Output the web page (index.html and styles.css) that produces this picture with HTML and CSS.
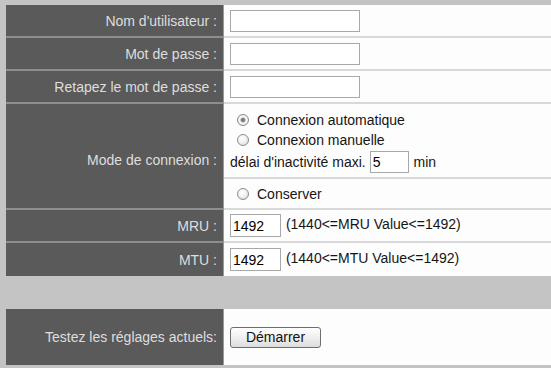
FILE: index.html
```html
<!DOCTYPE html>
<html>
<head>
    <title>Réglages PPPoE</title>
    <link rel="stylesheet" href="styles.css">
</head>
<body>
    <div class="page">
        <table class="settings">
            <tr>
                <td class="label">Nom d'utilisateur :</td>
                <td class="value"><input type="text" class="text-input"></td>
            </tr>
            <tr>
                <td class="label">Mot de passe :</td>
                <td class="value"><input type="password" class="text-input"></td>
            </tr>
            <tr>
                <td class="label">Retapez le mot de passe :</td>
                <td class="value"><input type="password" class="text-input"></td>
            </tr>
            <tr>
                <td class="label mode-label" rowspan="2">Mode de connexion :</td>
                <td class="value mode-cell">
                    <label class="radio-line first"><input type="radio" name="mode" checked> Connexion automatique</label>
                    <label class="radio-line"><input type="radio" name="mode"> Connexion manuelle</label>
                    <div class="idle-line">délai d'inactivité maxi. <input type="text" class="small-input" value="5"> min</div>
                </td>
            </tr>
            <tr>
                <td class="value keep-cell">
                    <label class="radio-line"><input type="radio" name="mode"> Conserver</label>
                </td>
            </tr>
            <tr>
                <td class="label">MRU :</td>
                <td class="value"><input type="text" class="num-input" value="1492"> (1440&lt;=MRU Value&lt;=1492)</td>
            </tr>
            <tr class="last">
                <td class="label">MTU :</td>
                <td class="value"><input type="text" class="num-input" value="1492"> (1440&lt;=MTU Value&lt;=1492)</td>
            </tr>
        </table>

        <div class="spacer"></div>

        <table class="settings">
            <tr class="last">
                <td class="label test-label">Testez les réglages actuels:</td>
                <td class="value"><button class="btn">Démarrer</button></td>
            </tr>
        </table>
    </div>
</body>
</html>
```

FILE: styles.css
```css
body {
    margin: 0;
    background-color: #c4c4c4;
    font-family: 'Liberation Sans', Arial, sans-serif;
    font-size: 14px;
}
.page {
    padding: 5px 0 2px 6px;
}
.settings {
    width: 100%;
    border-collapse: separate;
    border-spacing: 0;
}
.settings td {
    padding: 0;
    border-bottom: 2px solid #d9d9d9;
}
.settings tr.last td {
    border-bottom: none;
    height: 33px;
}
.label {
    width: 211px;
    height: 31px;
    background-color: #5a5a5a;
    color: #dedede;
    text-align: right;
    padding-right: 6px !important;
    border-right: 1px solid #9a9a9a;
    border-bottom-color: #8e8e8e !important;
}
.value {
    background-color: #fdfdfd;
    color: #151515;
    padding-left: 6px !important;
    height: 31px;
}
.mode-label {
    padding-top: 8px !important;
}
.mode-cell {
    height: 64px;
    padding-top: 5px !important;
    padding-bottom: 4px !important;
}
.keep-cell {
    height: 29px;
}
.settings tr.last .test-label {
    height: 56px;
}
.text-input {
    width: 130px;
    height: 22px;
    box-sizing: border-box;
    border: 1px solid #a8a8a8;
    margin: 0;
    vertical-align: middle;
}
.small-input {
    width: 39px;
    height: 22px;
    box-sizing: border-box;
    border: 1px solid #a8a8a8;
    margin: 0 1px 0 0;
    padding: 0 2px;
    font: inherit;
    vertical-align: middle;
}
.num-input {
    width: 51px;
    height: 23px;
    box-sizing: border-box;
    border: 1px solid #a8a8a8;
    margin: 0 1px 0 0;
    padding: 0 2px;
    font: inherit;
    vertical-align: middle;
}
.radio-line {
    display: flex;
    align-items: center;
    height: 20px;
}
.radio-line.first {
    height: 21px;
}
.idle-line {
    height: 23px;
    display: flex;
    align-items: center;
    white-space: pre;
}
.radio-line input {
    appearance: none;
    -webkit-appearance: none;
    width: 12px;
    height: 12px;
    margin: 0 8px 0 7px;
    border: 1px solid #8c8c8c;
    border-radius: 50%;
    background: radial-gradient(circle at 40% 35%, #ffffff 0%, #f2f2f2 45%, #d2d2d2 100%);
    box-sizing: border-box;
}
.radio-line input:checked {
    background: radial-gradient(circle, #707070 0, #8a8a8a 2px, #ffffff 3px, #f0f0f0 60%, #d2d2d2 100%);
}
.spacer {
    height: 33px;
}
.btn {
    width: 91px;
    height: 21px;
    border: 1px solid #6e6e6e;
    border-radius: 3px;
    background: linear-gradient(#ffffff, #ececec 60%, #dcdcdc);
    font: inherit;
    color: #111;
    padding: 0;
    vertical-align: middle;
}
```
